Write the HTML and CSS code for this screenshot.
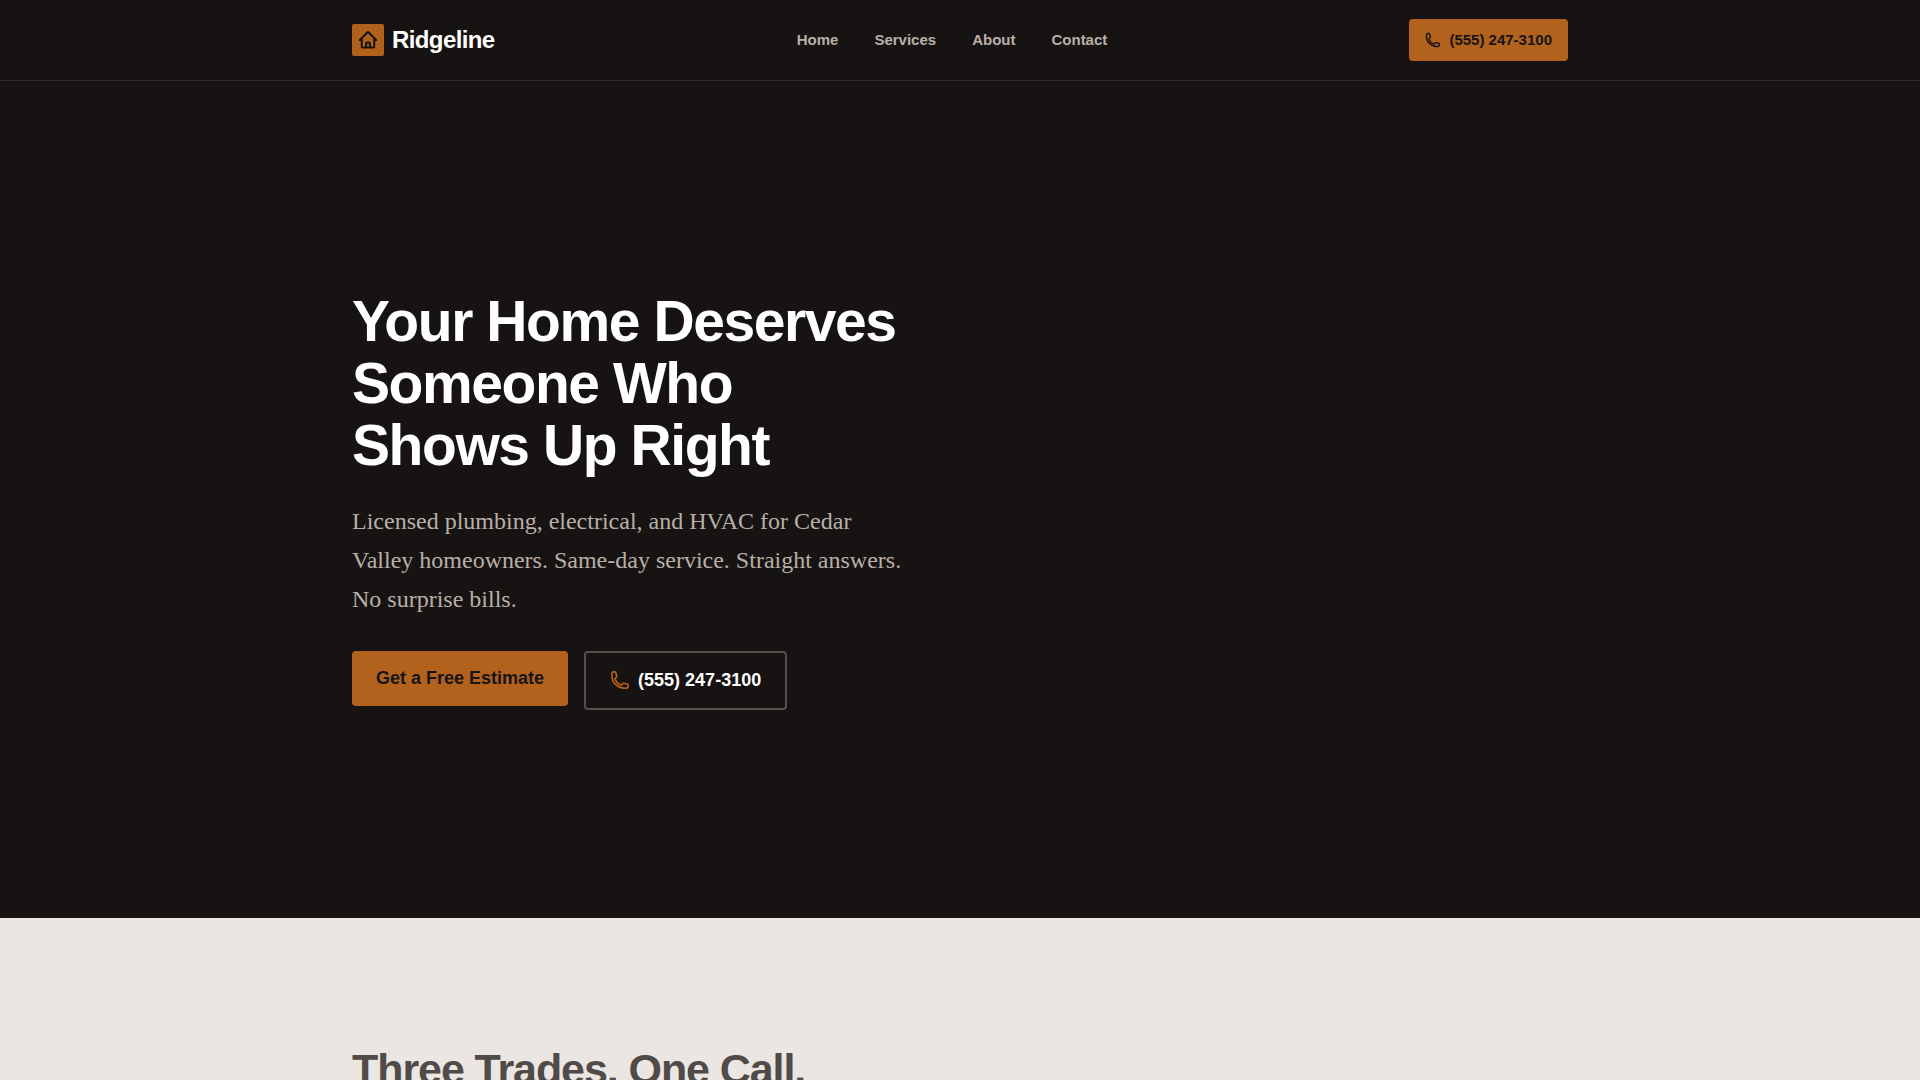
FILE: index.html
```
<!DOCTYPE html>
<html lang="en">
<head>
	<meta charset="utf-8">
	<title>Ridgeline</title>
	<meta name="viewport" content="width=device-width, initial-scale=1">
	<link rel="stylesheet" href="styles.css">
</head>
<body>
	<header class="site-header">
		<div class="container header-row">
			<a class="logo" href="#home">
				<span class="logo-mark">
					<svg viewBox="0 0 24 24" aria-hidden="true"><path d="M2.25 12l8.954-8.955c.44-.439 1.152-.439 1.591 0L21.75 12M4.5 9.750v10.125c0 .621.504 1.125 1.125 1.125H9.750v-4.875c0-.621.504-1.125 1.125-1.125h2.250c.621 0 1.125.504 1.125 1.125V21h4.125c.621 0 1.125-.504 1.125-1.125V9.750M8.250 21h8.250"/></svg>
				</span>
				Ridgeline
			</a>
			<nav class="main-nav">
				<a href="#home">Home</a>
				<a href="#services">Services</a>
				<a href="#about">About</a>
				<a href="#contact">Contact</a>
			</nav>
			<a class="header-phone" href="tel:5552473100">
				<svg viewBox="0 0 24 24" aria-hidden="true"><path d="M2.25 6.75c0 8.284 6.716 15 15 15h2.25a2.25 2.25 0 0 0 2.25-2.25v-1.372c0-.516-.351-.966-.852-1.091l-4.423-1.106c-.44-.11-.902.055-1.173.417l-.97 1.293c-.282.376-.769.542-1.21.38a12.035 12.035 0 0 1-7.143-7.143c-.162-.441.004-.928.38-1.21l1.293-.97c.363-.271.527-.734.417-1.173L6.963 3.102a1.125 1.125 0 0 0-1.091-.852H4.5A2.25 2.25 0 0 0 2.25 4.5v2.25z"/></svg>
				(555) 247-3100
			</a>
		</div>
	</header>

	<main>
		<section class="hero" id="home">
			<div class="container">
				<div class="hero-text">
					<h1>Your Home Deserves Someone Who Shows Up Right</h1>
					<p>Licensed plumbing, electrical, and HVAC for Cedar Valley homeowners. Same-day service. Straight answers. No surprise bills.</p>
					<div class="hero-actions">
						<a class="btn btn-primary" href="#contact">Get a Free Estimate</a>
						<a class="btn btn-outline" href="tel:5552473100">
							<svg viewBox="0 0 24 24" aria-hidden="true"><path d="M2.25 6.75c0 8.284 6.716 15 15 15h2.25a2.25 2.25 0 0 0 2.25-2.25v-1.372c0-.516-.351-.966-.852-1.091l-4.423-1.106c-.44-.11-.902.055-1.173.417l-.97 1.293c-.282.376-.769.542-1.21.38a12.035 12.035 0 0 1-7.143-7.143c-.162-.441.004-.928.38-1.21l1.293-.97c.363-.271.527-.734.417-1.173L6.963 3.102a1.125 1.125 0 0 0-1.091-.852H4.5A2.25 2.25 0 0 0 2.25 4.5v2.25z"/></svg>
							(555) 247-3100
						</a>
					</div>
				</div>
			</div>
		</section>

		<section class="services" id="services">
			<div class="container">
				<h2>Three Trades. One Call.</h2>
			</div>
		</section>
	</main>
</body>
</html>
```
FILE: styles.css
```
* {
	box-sizing: border-box;
}

body {
	margin: 0;
	background-color: #ebe6e2;
	color: #171312;
	font-family: "Liberation Sans", Arial, sans-serif;
}

a {
	color: inherit;
	text-decoration: none;
}

svg {
	fill: none;
	stroke: currentColor;
	stroke-width: 2;
	stroke-linecap: round;
	stroke-linejoin: round;
}

.container {
	width: 100%;
	max-width: 1280px;
	margin: 0 auto;
	padding: 0 32px;
}

/* Header */
.site-header {
	position: sticky;
	top: 0;
	z-index: 10;
	background-color: #171312;
	border-bottom: 1px solid #2e2a28;
}

.header-row {
	display: flex;
	align-items: center;
	justify-content: space-between;
	height: 80px;
}

.logo {
	display: flex;
	align-items: center;
	gap: 8px;
	color: #fff;
	font-size: 24px;
	font-weight: bold;
	letter-spacing: -0.025em;
}

.logo-mark {
	display: grid;
	place-items: center;
	width: 32px;
	height: 32px;
	background-color: #b2621d;
	border-radius: 2px;
	color: #171312;
}

.logo-mark svg {
	width: 20px;
	height: 20px;
	stroke-width: 2.5;
}

.main-nav {
	display: flex;
	gap: 36px;
	color: #b8b0a8;
	font-size: 15px;
	font-weight: bold;
	line-height: 22px;
}

.main-nav a:hover {
	color: #fff;
}

.header-phone {
	display: flex;
	align-items: center;
	gap: 8px;
	padding: 10px 16px;
	background-color: #b2621d;
	border-radius: 4px;
	font-size: 15px;
	font-weight: bold;
	line-height: 22px;
}

.header-phone svg {
	width: 16px;
	height: 16px;
}

/* Hero */
.hero {
	display: flex;
	align-items: center;
	min-height: calc(85vh - 81px);
	background-color: #171312;
}

.hero-text {
	max-width: 560px;
}

h1 {
	margin: 0 0 26px;
	color: #fff;
	font-size: 57px;
	line-height: 62px;
	letter-spacing: -0.025em;
}

.hero-text p {
	margin: 0 0 32px;
	color: #b8b0a8;
	font-family: "Liberation Serif", Georgia, serif;
	font-size: 24px;
	line-height: 39px;
}

.hero-actions {
	display: flex;
	align-items: flex-start;
	gap: 16px;
}

.btn {
	display: flex;
	align-items: center;
	gap: 8px;
	padding: 14px 24px;
	border-radius: 4px;
	font-size: 18px;
	font-weight: bold;
	line-height: 27px;
}

.btn-primary {
	background-color: #b2621d;
}

.btn-outline {
	border: 2px solid #55504d;
	color: #fff;
}

.btn-outline svg {
	width: 20px;
	height: 20px;
	color: #b2621d;
}

/* Services */
.services {
	padding: 128px 0 0;
}

h2 {
	margin: 0;
	color: #504b49;
	font-size: 43px;
	line-height: 46px;
	letter-spacing: -0.025em;
}
```
